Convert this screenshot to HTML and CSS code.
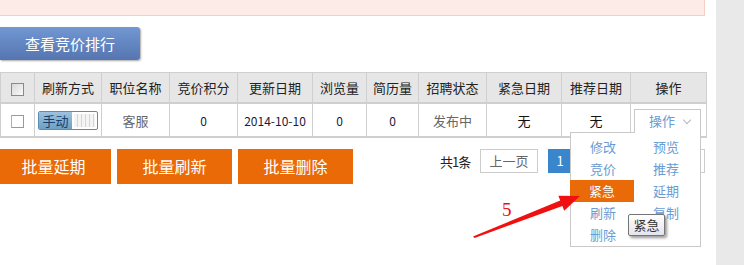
FILE: index.html
```html
<!DOCTYPE html>
<html lang="zh-CN">
<head>
    <meta charset="UTF-8">
    <title>职位管理</title>
    <link rel="stylesheet" href="styles.css">
</head>
<body>
    <div class="page">
        <div class="main">
            <div class="notice"></div>

            <div class="toolbar">
                <a class="btn-rank" href="#">查看竞价排行</a>
            </div>

            <table class="job-table">
                <colgroup>
                    <col style="width:34px"><col style="width:67px"><col style="width:68px"><col style="width:68px">
                    <col style="width:75px"><col style="width:54px"><col style="width:52px"><col style="width:68px">
                    <col style="width:75px"><col style="width:69px"><col style="width:76px">
                </colgroup>
                <thead>
                    <tr>
                        <th><span class="chk chk-head"></span></th>
                        <th>刷新方式</th>
                        <th>职位名称</th>
                        <th>竞价积分</th>
                        <th>更新日期</th>
                        <th>浏览量</th>
                        <th>简历量</th>
                        <th>招聘状态</th>
                        <th>紧急日期</th>
                        <th>推荐日期</th>
                        <th>操作</th>
                    </tr>
                </thead>
                <tbody>
                    <tr>
                        <td><span class="chk"></span></td>
                        <td>
                            <span class="toggle"><span class="toggle-on">手动</span><span class="toggle-grip"></span></span>
                        </td>
                        <td class="muted">客服</td>
                        <td class="num">0</td>
                        <td class="num">2014-10-10</td>
                        <td class="num">0</td>
                        <td class="num">0</td>
                        <td class="muted">发布中</td>
                        <td>无</td>
                        <td>无</td>
                        <td class="op-cell">
                            <div class="op-drop">
                                <div class="op-trigger">操作 <span class="caret"></span></div>
                                <ul class="op-menu">
                                    <li>修改</li>
                                    <li>竞价</li>
                                    <li class="active">紧急</li>
                                    <li>刷新</li>
                                    <li>删除</li>
                                    <li>预览</li>
                                    <li>推荐</li>
                                    <li>延期</li>
                                    <li>复制</li>
                                </ul>
                            </div>
                        </td>
                    </tr>
                </tbody>
            </table>

            <div class="footer-bar">
                <div class="batch">
                    <a class="btn-batch" href="#">批量延期</a>
                    <a class="btn-batch" href="#">批量刷新</a>
                    <a class="btn-batch" href="#">批量删除</a>
                </div>
                <div class="pager">
                    <span class="total">共1条</span>
                    <a class="page-btn" href="#">上一页</a>
                    <a class="page-btn current" href="#">1</a>
                    <!-- 下一页按钮被下拉菜单挡住 -->
                    <a class="page-btn next" href="#" aria-label="下一页"></a>
                </div>
            </div>

            <!-- 标注 -->
            <svg class="mark-arrow" width="716" height="265" viewBox="0 0 716 265">
                <polygon fill="#f01010" points="473,236.5 560.2,200.4 558.4,195.7 580,196 564.2,210.7 562.4,206 474.5,238"/>
            </svg>
            <span class="mark-num">5</span>
            <span class="tip">紧急</span>
        </div>
        <div class="side"></div>
    </div>
</body>
</html>
```

FILE: styles.css
```css
/* 页面整体 */
body {
    margin: 0;
    font-family: "Noto Sans CJK SC", sans-serif;
    font-size: 13px;
    color: #333;
    background-color: #fff;
}

a {
    text-decoration: none;
}

.page {
    display: flex;
    height: 265px;
    overflow: hidden;
}

.main {
    position: relative;
    width: 716px;
    flex: none;
}

.side {
    flex: 1;
    background-color: #e9e9e9;
}

/* 顶部提示条 */
.notice {
    width: 704px;
    height: 15px;
    background-color: #fcebe7;
    border-right: 1px solid #f5cfc4;
    border-bottom: 1px solid #f5cfc4;
}

.toolbar {
    margin-top: 11px;
}

.btn-rank {
    display: block;
    width: 140px;
    height: 33px;
    line-height: 33px;
    text-align: center;
    font-size: 15px;
    color: #fff;
    background: linear-gradient(#7297d2, #5475b0);
    border-radius: 0 3px 3px 0;
    box-shadow: 1px 1px 2px rgba(0, 0, 0, 0.35);
}

/* 职位表格 */
.job-table {
    margin-top: 12px;
    width: 706px;
    table-layout: fixed;
    border-collapse: collapse;
    border: 1px solid #cfcfcf;
}

.job-table th {
    height: 29px;
    padding: 0;
    font-weight: normal;
    font-size: 13px;
    color: #222;
    background-color: #e6e6e6;
    border: 1px solid #cfcfcf;
    border-bottom: 2px solid #cfcfcf;
}

.job-table td {
    height: 32px;
    padding: 0;
    text-align: center;
    color: #111;
    border: 1px solid #cfcfcf;
    border-bottom: 2px solid #cfcfcf;
}

.job-table td.muted {
    color: #666;
}

.job-table td.num {
    color: #1a1a40;
    font-size: 12px;
}

.chk {
    display: inline-block;
    width: 11px;
    height: 11px;
    vertical-align: middle;
    background-color: #fff;
    border: 1px solid #9a9a9a;
    border-left-color: #d0a888;
}

.chk-head {
    border-color: #8a8a8a;
    background: linear-gradient(135deg, #d8d8d8, #fafafa);
}

/* 刷新方式开关 */
.toggle {
    display: inline-flex;
    width: 60px;
    height: 19px;
    vertical-align: middle;
    border: 1px solid #5a8db6;
    border-radius: 2px;
    box-sizing: border-box;
    overflow: hidden;
}

.toggle-on {
    width: 33px;
    line-height: 17px;
    font-size: 13px;
    color: #163f6a;
    background: linear-gradient(#9cc2de, #6d9fc6);
}

.toggle-grip {
    flex: 1;
    margin: 2px;
    background: repeating-linear-gradient(90deg, #f4f4f4 0, #f4f4f4 3px, #d6d6d6 3px, #d6d6d6 4px);
}

/* 操作下拉 */
.op-cell {
    position: relative;
}

.op-drop {
    position: absolute;
    left: 3px;
    top: 5px;
    width: 67px;
}

.op-trigger {
    position: relative;
    z-index: 2;
    height: 23px;
    line-height: 22px;
    padding-left: 14px;
    text-align: left;
    color: #6a9bd2;
    background-color: #fff;
    border: 1px solid #c9c9c9;
    border-bottom: none;
}

.caret {
    display: inline-block;
    width: 5px;
    height: 5px;
    margin-left: 6px;
    vertical-align: 3px;
    border-right: 1px solid #b8b8b8;
    border-bottom: 1px solid #b8b8b8;
    transform: rotate(45deg);
}

.op-menu {
    position: absolute;
    z-index: 1;
    right: 0;
    top: 23px;
    width: 131px;
    height: 115px;
    box-sizing: border-box;
    margin: 0;
    padding: 3px 0 0;
    list-style: none;
    background-color: #fff;
    border: 1px solid #c9c9c9;
    display: grid;
    grid-template-columns: 63px 1fr;
    grid-template-rows: repeat(5, 22px);
    grid-auto-flow: column;
}

.op-menu li {
    padding-left: 19px;
    line-height: 22px;
    text-align: left;
    color: #6a9bd2;
}

.op-menu li.active {
    margin-left: -1px;
    color: #fff;
    background-color: #e96a07;
}

/* 底部批量按钮与分页 */
.footer-bar {
    display: flex;
    align-items: flex-start;
    margin-top: 11px;
}

.batch {
    display: flex;
    gap: 6px;
    margin-left: -4px;
}

.btn-batch {
    width: 115px;
    height: 35px;
    line-height: 35px;
    text-align: center;
    font-size: 16px;
    color: #fff;
    background-color: #e96a07;
}

.pager {
    display: flex;
    align-items: center;
    margin-left: 87px;
    height: 24px;
}

.total {
    width: 27px;
    margin-right: 13px;
    white-space: nowrap;
    letter-spacing: -1px;
    color: #222;
}

.page-btn {
    width: 56px;
    height: 22px;
    line-height: 22px;
    text-align: center;
    color: #666;
    border: 1px solid #cccccc;
}

.page-btn.current {
    width: 22px;
    margin-left: 10px;
    color: #fff;
    background-color: #3a86cc;
    border-color: #3a86cc;
}

.page-btn.next {
    margin-left: 75px;
}

/* 截图上的标注 */
.mark-arrow {
    position: absolute;
    left: 0;
    top: 0;
    pointer-events: none;
    z-index: 5;
}

.mark-num {
    position: absolute;
    left: 502px;
    top: 199px;
    font-family: "Liberation Serif", serif;
    font-size: 19px;
    color: #e81010;
}

.tip {
    position: absolute;
    z-index: 6;
    left: 628px;
    top: 214px;
    width: 35px;
    height: 20px;
    line-height: 20px;
    text-align: center;
    font-size: 13px;
    color: #333;
    background: linear-gradient(#ffffff, #e4e4ec);
    border: 1px solid #767676;
    border-radius: 2px;
    box-shadow: 2px 2px 3px rgba(0, 0, 0, 0.4);
}
```
